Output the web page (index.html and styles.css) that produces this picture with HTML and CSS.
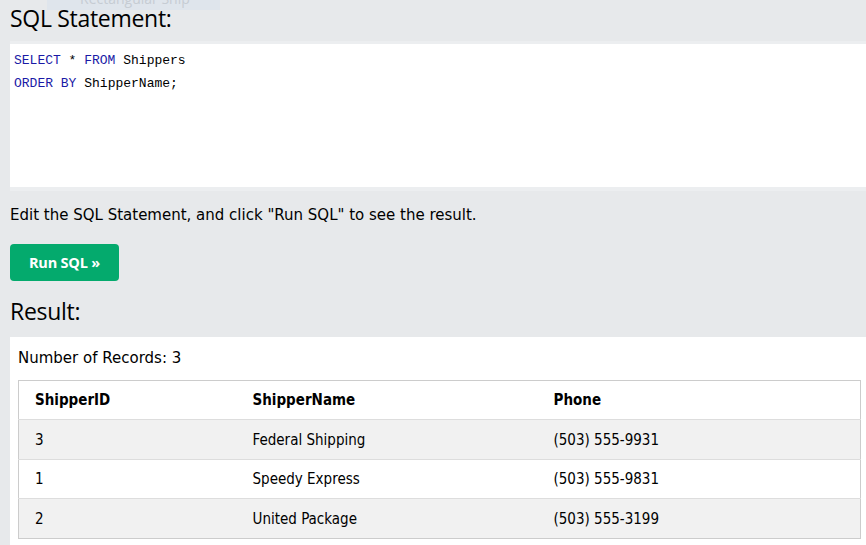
FILE: index.html
```html
<!DOCTYPE html>
<html lang="en">
<head>
<meta charset="utf-8">
<title>SQL Tryit</title>
<link rel="stylesheet" href="styles.css">
</head>
<body>
<div class="snip"><span class="snip-text">Rectangular Snip</span></div>
<main class="page">
  <h3 class="heading first">SQL Statement:</h3>
  <div class="editor">
    <div class="code-line"><span class="kw">SELECT</span> * <span class="kw">FROM</span> Shippers</div>
    <div class="code-line"><span class="kw">ORDER BY</span> ShipperName;</div>
  </div>
  <p class="hint">Edit the SQL Statement, and click "Run SQL" to see the result.</p>
  <button class="run-btn" type="button">Run SQL »</button>
  <h3 class="heading result">Result:</h3>
  <section class="result-box">
    <p class="count">Number of Records: 3</p>
    <table class="data">
      <colgroup>
        <col class="c1"><col class="c2"><col class="c3">
      </colgroup>
      <thead>
        <tr><th>ShipperID</th><th>ShipperName</th><th>Phone</th></tr>
      </thead>
      <tbody>
        <tr><td>3</td><td>Federal Shipping</td><td>(503) 555-9931</td></tr>
        <tr><td>1</td><td>Speedy Express</td><td>(503) 555-9831</td></tr>
        <tr><td>2</td><td>United Package</td><td>(503) 555-3199</td></tr>
      </tbody>
    </table>
  </section>
</main>
</body>
</html>
```

FILE: styles.css
```css
html, body {
  margin: 0;
  padding: 0;
  height: 100%;
  overflow: hidden;
}

body {
  background: #e7e9eb;
  color: #000;
  font-family: "DejaVu Sans", Verdana, sans-serif;
  position: relative;
}

.snip {
  position: absolute;
  left: 47px;
  top: 0;
  width: 173px;
  height: 10px;
  background: #dfe5ec;
  overflow: hidden;
}

.snip-text {
  position: absolute;
  left: 33px;
  top: -7px;
  font-family: "Open Sans", sans-serif;
  font-size: 14px;
  line-height: 12px;
  color: #c6ccd3;
  white-space: nowrap;
}

.page {
  padding-left: 10px;
}

.heading {
  margin: 0;
  font-family: "Open Sans", sans-serif;
  font-weight: 400;
  font-size: 23px;
  line-height: 24px;
  letter-spacing: -0.3px;
}

.heading.first {
  padding-top: 6px;
  height: 35px;
}

.editor {
  background: #fff;
  border-top: 3px solid #eceef0;
  border-bottom: 4px solid #eceef0;
  height: 138px;
  padding: 5px 4px 0 4px;
  box-sizing: content-box;
}

.code-line {
  font-family: "Liberation Mono", monospace;
  font-size: 13px;
  line-height: 23px;
  height: 23px;
  white-space: pre;
}

.kw {
  color: #1a1aa6;
}

.hint {
  margin: 0;
  padding-top: 14px;
  font-size: 15px;
  line-height: 20px;
  height: 23px;
}

.run-btn {
  display: block;
  margin-top: 16px;
  width: 109px;
  height: 37px;
  border: none;
  border-radius: 4px;
  background: #04aa6d;
  color: #fff;
  font-family: "Open Sans", sans-serif;
  font-weight: 700;
  font-size: 14.5px;
  padding: 0;
  letter-spacing: -0.2px;
}

.heading.result {
  padding-top: 18px;
  height: 38px;
}

.result-box {
  background: #fff;
  padding: 8px 8px 20px 8px;
  min-height: 200px;
}

.count {
  margin: 0;
  font-size: 15px;
  line-height: 26px;
  height: 35px;
}

.data {
  width: 842px;
  border-collapse: collapse;
  border: 1px solid #cccccc;
  font-family: "DejaVu Sans", Verdana, sans-serif;
  font-stretch: condensed;
  font-size: 15px;
  table-layout: fixed;
}

.c1 { width: 218px; }
.c2 { width: 301px; }
.c3 { width: 323px; }

.data th,
.data td {
  text-align: left;
  padding: 8px 16px;
  line-height: 22px;
  height: 22px;
  border-bottom: 1px solid #dddddd;
}

.data th {
  font-weight: 700;
}

.data tbody tr:nth-child(odd) {
  background: #f1f1f1;
}

.data tbody tr:nth-child(odd) td {
  padding-top: 9px;
}

.data tbody tr:last-child td {
  border-bottom: none;
}
```
